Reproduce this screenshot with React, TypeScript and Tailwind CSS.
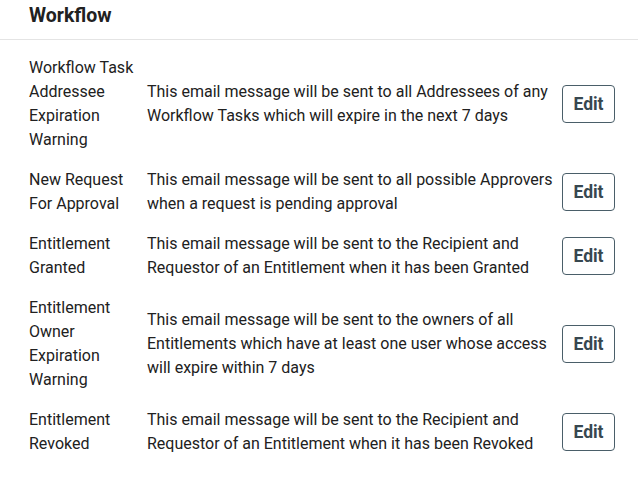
import React from 'react';

interface Notification {
  name: string[];
  description: string;
}

const notifications: Notification[] = [
  {
    name: ['Workflow Task', 'Addressee', 'Expiration', 'Warning'],
    description:
      'This email message will be sent to all Addressees of any Workflow Tasks which will expire in the next 7 days',
  },
  {
    name: ['New Request', 'For Approval'],
    description:
      'This email message will be sent to all possible Approvers when a request is pending approval',
  },
  {
    name: ['Entitlement', 'Granted'],
    description:
      'This email message will be sent to the Recipient and Requestor of an Entitlement when it has been Granted',
  },
  {
    name: ['Entitlement', 'Owner', 'Expiration', 'Warning'],
    description:
      'This email message will be sent to the owners of all Entitlements which have at least one user whose access will expire within 7 days',
  },
  {
    name: ['Entitlement', 'Revoked'],
    description:
      'This email message will be sent to the Recipient and Requestor of an Entitlement when it has been Revoked',
  },
];

const App: React.FC = () => {
  return (
    <div className="min-h-screen bg-white font-['Roboto',sans-serif] text-[#212121]">
      <div className="h-[40px] border-b border-[#e4e4e4] px-[29px] pt-[4px]">
        <h1 className="text-[19.5px] font-bold leading-[24px]">Workflow</h1>
      </div>
      <div className="pt-[8px] pl-[29px] pr-[23px]">
        {notifications.map((n, i) => (
          <div key={i} className="flex items-center py-[8px]">
            <div className="w-[118px] shrink-0 text-[16px] leading-[24px]">
              {n.name.map((line, j) => (
                <div key={j}>{line}</div>
              ))}
            </div>
            <div className="w-[406px] shrink-0 text-[16px] leading-[24px]">{n.description}</div>
            <div className="ml-auto">
              <button className="h-[38px] w-[53px] rounded-[4px] border border-[#4a5e69] bg-white text-[17.5px] font-bold text-[#37474f]">
                Edit
              </button>
            </div>
          </div>
        ))}
      </div>
    </div>
  );
};

export default App;
